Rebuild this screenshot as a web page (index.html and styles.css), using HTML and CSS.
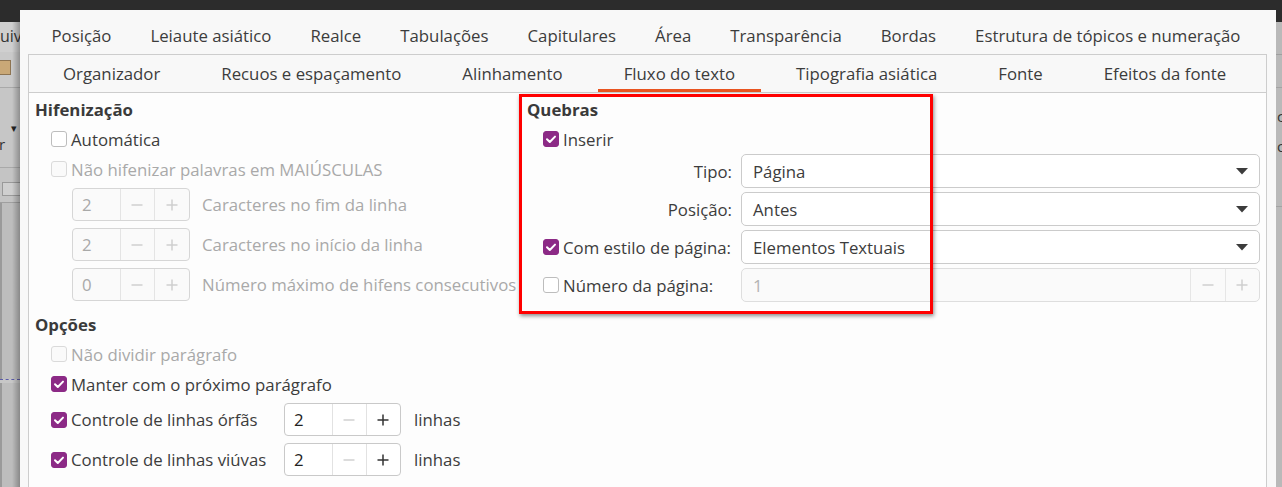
FILE: index.html
```html
<!DOCTYPE html>
<html lang="pt">
<head>
<meta charset="utf-8">
<title>Parágrafo</title>
<link rel="stylesheet" href="styles.css">
</head>
<body>
<div class="desk">
  <div class="desk-top"></div>
  <div class="desk-left">
    <div class="dl-menu">uiv</div>
    <div class="dl-tool"><span class="dl-folder"></span></div>
    <div class="dl-tool2"><span class="dl-arrow">▾</span><span class="dl-r">r</span></div>
    <div class="dl-ruler"><span class="dl-box"></span></div>
    <div class="dl-page"></div>
    <div class="dl-dash"></div>
    <div class="dl-page2"></div>
  </div>
  <div class="desk-mid"></div>
  <div class="desk-right">
    <div class="dr-a"></div>
    <div class="dr-b"></div>
    <div class="dr-c">c</div>
    <div class="dr-d">o</div>
    <div class="dr-e"></div>
  </div>
</div>

<div class="dialog">
  <div class="tabs-top">
    <div class="tab">Posição</div>
    <div class="tab">Leiaute asiático</div>
    <div class="tab">Realce</div>
    <div class="tab">Tabulações</div>
    <div class="tab">Capitulares</div>
    <div class="tab">Área</div>
    <div class="tab">Transparência</div>
    <div class="tab">Bordas</div>
    <div class="tab">Estrutura de tópicos e numeração</div>
  </div>
  <div class="frame">
    <div class="tabs-inner">
      <div class="itab">Organizador</div>
      <div class="itab">Recuos e espaçamento</div>
      <div class="itab">Alinhamento</div>
      <div class="itab active">Fluxo do texto</div>
      <div class="itab">Tipografia asiática</div>
      <div class="itab">Fonte</div>
      <div class="itab">Efeitos da fonte</div>
    </div>
    <div class="content">
      <div class="col-left">
        <div class="heading">Hifenização</div>
        <div class="cbrow first">
          <span class="cb"></span><span>Automática</span>
        </div>
        <div class="cbrow disabled">
          <span class="cb"></span><span>Não hifenizar palavras em MAIÚSCULAS</span>
        </div>
        <div class="spinrow first disabled">
          <div class="spin">
            <span class="val">2</span>
            <span class="btn"><svg width="12" height="12" viewBox="0 0 12 12"><path d="M0.5 6h11" /></svg></span>
            <span class="btn"><svg width="12" height="12" viewBox="0 0 12 12"><path d="M0.5 6h11M6 0.5v11" /></svg></span>
          </div>
          <span>Caracteres no fim da linha</span>
        </div>
        <div class="spinrow disabled">
          <div class="spin">
            <span class="val">2</span>
            <span class="btn"><svg width="12" height="12" viewBox="0 0 12 12"><path d="M0.5 6h11" /></svg></span>
            <span class="btn"><svg width="12" height="12" viewBox="0 0 12 12"><path d="M0.5 6h11M6 0.5v11" /></svg></span>
          </div>
          <span>Caracteres no início da linha</span>
        </div>
        <div class="spinrow disabled">
          <div class="spin">
            <span class="val">0</span>
            <span class="btn"><svg width="12" height="12" viewBox="0 0 12 12"><path d="M0.5 6h11" /></svg></span>
            <span class="btn"><svg width="12" height="12" viewBox="0 0 12 12"><path d="M0.5 6h11M6 0.5v11" /></svg></span>
          </div>
          <span>Número máximo de hifens consecutivos</span>
        </div>

        <div class="heading second">Opções</div>
        <div class="cbrow first disabled">
          <span class="cb"></span><span>Não dividir parágrafo</span>
        </div>
        <div class="cbrow">
          <span class="cb checked"><svg width="14" height="14" viewBox="0 0 14 14"><path d="M3 7.2l2.8 2.8L11 4.6" /></svg></span><span>Manter com o próximo parágrafo</span>
        </div>
        <div class="optrow first">
          <div class="optlabel"><span class="cb checked"><svg width="14" height="14" viewBox="0 0 14 14"><path d="M3 7.2l2.8 2.8L11 4.6" /></svg></span><span>Controle de linhas órfãs</span></div>
          <div class="spin enabled">
            <span class="val">2</span>
            <span class="btn off"><svg width="12" height="12" viewBox="0 0 12 12"><path d="M0.5 6h11" /></svg></span>
            <span class="btn"><svg width="12" height="12" viewBox="0 0 12 12"><path d="M0.5 6h11M6 0.5v11" /></svg></span>
          </div>
          <span class="unit">linhas</span>
        </div>
        <div class="optrow">
          <div class="optlabel"><span class="cb checked"><svg width="14" height="14" viewBox="0 0 14 14"><path d="M3 7.2l2.8 2.8L11 4.6" /></svg></span><span>Controle de linhas viúvas</span></div>
          <div class="spin enabled">
            <span class="val">2</span>
            <span class="btn off"><svg width="12" height="12" viewBox="0 0 12 12"><path d="M0.5 6h11" /></svg></span>
            <span class="btn"><svg width="12" height="12" viewBox="0 0 12 12"><path d="M0.5 6h11M6 0.5v11" /></svg></span>
          </div>
          <span class="unit">linhas</span>
        </div>
      </div>

      <div class="col-right">
        <div class="heading">Quebras</div>
        <div class="cbrow first">
          <span class="cb checked"><svg width="14" height="14" viewBox="0 0 14 14"><path d="M3 7.2l2.8 2.8L11 4.6" /></svg></span><span>Inserir</span>
        </div>
        <div class="brk-grid">
          <div class="lbl right">Tipo:</div>
          <div class="combo"><span>Página</span><svg width="12" height="7" viewBox="0 0 12 7"><path d="M0 0h12L6 6.5z" /></svg></div>
          <div class="lbl right">Posição:</div>
          <div class="combo"><span>Antes</span><svg width="12" height="7" viewBox="0 0 12 7"><path d="M0 0h12L6 6.5z" /></svg></div>
          <div class="lbl cbl"><span class="cb checked"><svg width="14" height="14" viewBox="0 0 14 14"><path d="M3 7.2l2.8 2.8L11 4.6" /></svg></span><span>Com estilo de página:</span></div>
          <div class="combo"><span>Elementos Textuais</span><svg width="12" height="7" viewBox="0 0 12 7"><path d="M0 0h12L6 6.5z" /></svg></div>
          <div class="lbl cbl"><span class="cb"></span><span>Número da página:</span></div>
          <div class="numfield">
            <span class="val">1</span>
            <span class="btn"><svg width="12" height="12" viewBox="0 0 12 12"><path d="M0.5 6h11" /></svg></span>
            <span class="btn"><svg width="12" height="12" viewBox="0 0 12 12"><path d="M0.5 6h11M6 0.5v11" /></svg></span>
          </div>
        </div>
      </div>
    </div>
  </div>
</div>

<div class="highlight"></div>
</body>
</html>
```

FILE: styles.css
```css
* { box-sizing: border-box; }

body {
  margin: 0;
  width: 1282px;
  height: 487px;
  overflow: hidden;
  position: relative;
  font-family: "Open Sans", "Noto Sans", sans-serif;
  font-size: 16.8px;
  color: #3c3c3c;
  background: #c4c4c4;
}

/* ---------- background application ---------- */
.desk {
  display: grid;
  grid-template-columns: 20px 1fr 6px;
  grid-template-rows: 22px 1fr;
  width: 1282px;
  height: 487px;
}
.desk-top { grid-column: 1 / -1; background: #2c2c2c; }
.desk-left {
  position: relative;
  overflow: hidden;
  background: #c2c2c2;
  display: flex;
  flex-direction: column;
}
.desk-left::after {
  content: "";
  position: absolute;
  top: 0; right: 0; bottom: 0;
  width: 8px;
  background: linear-gradient(to right, rgba(0,0,0,0), rgba(0,0,0,0.28));
}
.dl-menu {
  height: 30px;
  line-height: 28px;
  font-size: 16px;
  color: #333;
  background: #cfcfcf;
  white-space: nowrap;
}
.dl-tool {
  height: 36px;
  background: #c9c9c9;
  border-bottom: 1px solid #a9a9a9;
  padding-top: 8px;
}
.dl-folder {
  display: block;
  width: 11px;
  height: 15px;
  background: #c9a877;
  border: 1px solid #8d7452;
  border-left: none;
}
.dl-tool2 {
  height: 80px;
  background: #c6c6c6;
  position: relative;
  border-bottom: 1px solid #a9a9a9;
}
.dl-arrow { position: absolute; left: 11px; top: 32px; font-size: 11px; color: #222; }
.dl-r { position: absolute; left: -1px; top: 46px; font-size: 15px; color: #333; }
.dl-ruler { height: 35px; background: #c4c4c4; padding-top: 14px; border-bottom: 1px solid #9f9f9f; }
.dl-box { display: block; margin-left: 2px; width: 20px; height: 14px; border: 1px solid #999; background: #cfcfcf; }
.dl-page { height: 176px; background: #bdbdbd; border-left: 2px solid #9a9a9a; }
.dl-dash { height: 4px; border-top: 1px dashed #5c5ca8; background: #c7c7c7; }
.dl-page2 { flex: 1; background: #bdbdbd; border-left: 2px solid #9a9a9a; }

.desk-mid { background: #c4c4c4; }
.desk-right {
  background: #b9b9b9;
  display: flex;
  flex-direction: column;
  overflow: hidden;
}
.dr-a { height: 33px; border-bottom: 1px solid #9f9f9f; }
.dr-b { height: 33px; border-bottom: 1px solid #a3a3a3; }
.dr-c { height: 30px; line-height: 30px; font-size: 15px; color: #333; padding-left: 1px; margin-top: 13px; }
.dr-d { height: 30px; line-height: 30px; font-size: 15px; color: #333; padding-left: 1px; }
.dr-e { height: 46px; border-bottom: 1px solid #a3a3a3; }

/* ---------- dialog window ---------- */
.dialog {
  position: absolute;
  left: 20px;
  top: 10px;
  width: 1256px;
  height: 477px;
  background: #f8f8f8;
  display: flex;
  flex-direction: column;
}

.tabs-top {
  display: flex;
  height: 44px;
  padding: 7px 0 0 12px;
  align-items: center;
  white-space: nowrap;
}
.tabs-top .tab { padding: 0 19.5px; }

.frame {
  flex: 1;
  margin: 0 9px 0 8px;
  border: 1px solid #cdcdcd;
  border-bottom: none;
  display: flex;
  flex-direction: column;
}

.tabs-inner {
  display: flex;
  height: 38px;
  padding-left: 8px;
  gap: 9px;
  border-bottom: 1px solid #cdcdcd;
  background: #f8f8f8;
  white-space: nowrap;
}
.itab {
  padding: 3px 26px 0;
  display: flex;
  align-items: center;
  border-bottom: 3px solid transparent;
}
.itab.active { border-bottom-color: #e95420; }

.content {
  flex: 1;
  display: flex;
  padding: 0 6px;
  background: #fdfdfd;
}
.col-left { width: 492px; flex: none; }
.col-right { flex: 1; }

.heading {
  font-weight: 700;
  height: 20px;
  line-height: 20px;
  margin-top: 7px;
  color: #3a3a3a;
}
.heading.second { margin-top: 14px; }

/* checkboxes */
.cb {
  flex: none;
  width: 16px;
  height: 16px;
  border: 1px solid #bdbdbd;
  border-radius: 3px;
  background: #fff;
  display: inline-flex;
  align-items: center;
  justify-content: center;
}
.cb.checked { background: #8c2a86; border-color: #8c2a86; }
.cb svg path { fill: none; stroke: #fff; stroke-width: 2; stroke-linecap: round; stroke-linejoin: round; }

.cbrow {
  display: flex;
  align-items: center;
  gap: 4px;
  height: 30px;
  margin-left: 16px;
  white-space: nowrap;
}
.cbrow.first { margin-top: 4px; }

.disabled { color: #a9a9a9; }
.disabled .cb { border-color: #dadada; background: #fafafa; }

/* spin buttons */
.spinrow {
  display: flex;
  align-items: center;
  gap: 12px;
  height: 33px;
  margin: 7px 0 0 37px;
  white-space: nowrap;
}
.spinrow.first { margin-top: 4px; }

.spin {
  flex: none;
  display: flex;
  width: 118px;
  height: 33px;
  border: 1px solid #d6d6d6;
  border-radius: 4px;
  background: #fafafa;
}
.spin .val {
  width: 46.5px;
  padding-left: 9px;
  display: flex;
  align-items: center;
}
.btn {
  flex: 1;
  display: flex;
  align-items: center;
  justify-content: center;
  border-left: 1px solid #e4e4e4;
}
.btn svg path { fill: none; stroke: #cfcfcf; stroke-width: 1.5; }

.spin.enabled { width: 117px; background: #fff; border-color: #c9c9c9; color: #222; }
.spin.enabled .btn { border-left-color: #e2e2e2; }
.spin.enabled .btn svg path { stroke: #333; }
.spin.enabled .btn.off svg path { stroke: #d0d0d0; }

.optrow {
  display: flex;
  align-items: center;
  height: 33px;
  margin: 7px 0 0 16px;
  white-space: nowrap;
}
.optrow.first { margin-top: 4px; }
.optlabel { width: 233px; display: flex; align-items: center; gap: 4px; }
.unit { margin-left: 13px; }

/* breaks section */
.brk-grid {
  display: grid;
  grid-template-columns: 189px 519px;
  grid-auto-rows: 34px;
  column-gap: 9px;
  row-gap: 4px;
  margin-left: 16px;
}
.lbl { display: flex; align-items: center; white-space: nowrap; }
.lbl.right { justify-content: flex-end; }
.lbl.cbl { gap: 4px; }

.combo {
  display: flex;
  align-items: center;
  justify-content: space-between;
  padding: 0 11px 0 11px;
  border: 1px solid #cbcbcb;
  border-radius: 5px;
  background: #fff;
}
.combo svg path { fill: #3c3c3c; }

.numfield {
  display: flex;
  border: 1px solid #dedede;
  border-radius: 5px;
  background: #fafafa;
  color: #b3b3b3;
}
.numfield .val {
  flex: 1;
  padding-left: 11px;
  display: flex;
  align-items: center;
}
.numfield .btn { flex: none; width: 34.5px; border-left-color: #e6e6e6; }

/* annotation overlay */
.highlight {
  position: absolute;
  left: 519px;
  top: 94px;
  width: 414px;
  height: 220px;
  border: 3px solid #ff0000;
  box-shadow: 1px 2px 4px rgba(0, 0, 0, 0.45);
}
```
